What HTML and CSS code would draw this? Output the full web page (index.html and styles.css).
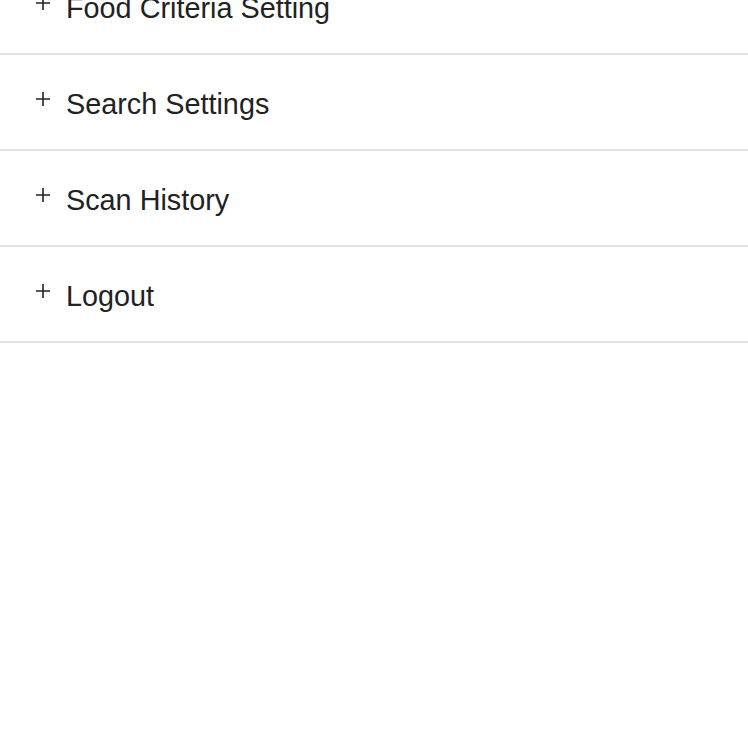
FILE: index.html
```html
<!DOCTYPE html>
<html>
<head>
<meta charset="utf-8">
<link rel="stylesheet" href="styles.css">
</head>
<body>
<div class="menu">
  <div class="item"><svg class="plus" viewBox="0 0 14 14"><path d="M7 0V14M0 7H14"/></svg><span class="label">Food Criteria Setting</span></div>
  <div class="item"><svg class="plus" viewBox="0 0 14 14"><path d="M7 0V14M0 7H14"/></svg><span class="label">Search Settings</span></div>
  <div class="item"><svg class="plus" viewBox="0 0 14 14"><path d="M7 0V14M0 7H14"/></svg><span class="label">Scan History</span></div>
  <div class="item"><svg class="plus" viewBox="0 0 14 14"><path d="M7 0V14M0 7H14"/></svg><span class="label">Logout</span></div>
</div>
</body>
</html>
```
FILE: styles.css
```css
html, body {
  margin: 0;
  padding: 0;
  background: #fff;
}
body {
  font-family: "Liberation Sans", Arial, sans-serif;
  color: #222;
  overflow: hidden;
}
.menu {
  margin-top: -41px;
}
.item {
  height: 90px;
  padding-top: 4px;
  border-bottom: 2px solid #e2e2e2;
  display: flex;
  align-items: center;
  padding-left: 36px;
}
.plus {
  width: 14px;
  height: 14px;
  stroke: #222;
  stroke-width: 1.6;
  fill: none;
  margin-top: -10px;
  flex: none;
}
.label {
  font-size: 28.8px;
  margin-left: 16px;
  line-height: 1;
}
```
